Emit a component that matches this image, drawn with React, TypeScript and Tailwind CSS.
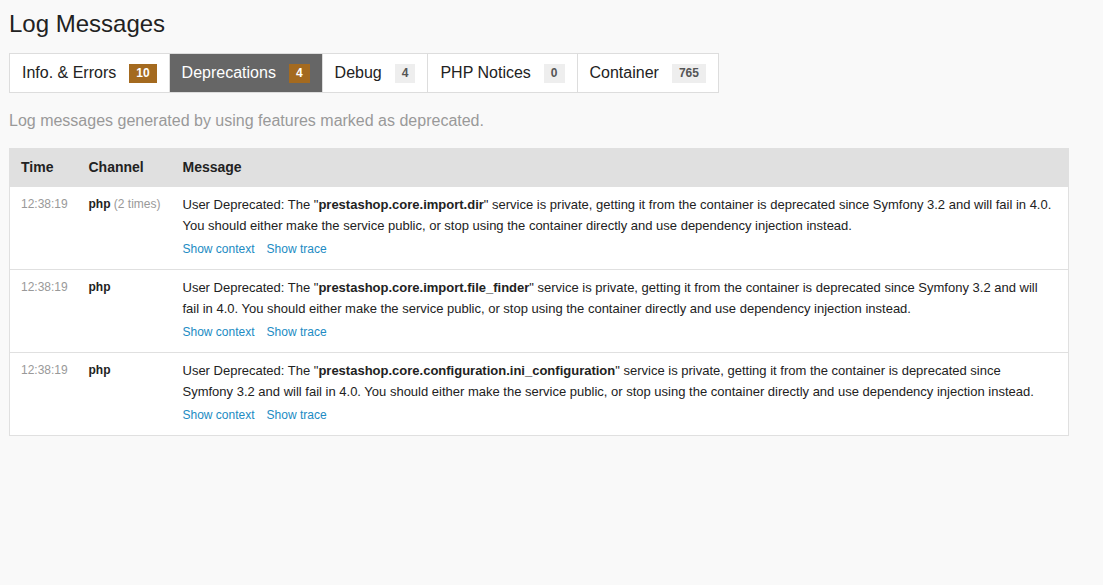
import type { ReactElement } from 'react'

interface Tab {
  label: string
  count: number
  active?: boolean
  warn?: boolean
}

const tabs: Tab[] = [
  { label: 'Info. & Errors', count: 10, warn: true },
  { label: 'Deprecations', count: 4, active: true, warn: true },
  { label: 'Debug', count: 4 },
  { label: 'PHP Notices', count: 0 },
  { label: 'Container', count: 765 },
]

interface LogRow {
  service: string
  before: string
  after: string
  times?: number
}

const rows: LogRow[] = [
  {
    service: 'prestashop.core.import.dir',
    before: 'User Deprecated: The "',
    after:
      '" service is private, getting it from the container is deprecated since Symfony 3.2 and will fail in 4.0. You should either make the service public, or stop using the container directly and use dependency injection instead.',
    times: 2,
  },
  {
    service: 'prestashop.core.import.file_finder',
    before: 'User Deprecated: The "',
    after:
      '" service is private, getting it from the container is deprecated since Symfony 3.2 and will fail in 4.0. You should either make the service public, or stop using the container directly and use dependency injection instead.',
  },
  {
    service: 'prestashop.core.configuration.ini_configuration',
    before: 'User Deprecated: The "',
    after:
      '" service is private, getting it from the container is deprecated since Symfony 3.2 and will fail in 4.0. You should either make the service public, or stop using the container directly and use dependency injection instead.',
  },
]

function TabItem({ tab, first }: { tab: Tab; first: boolean }): ReactElement {
  return (
    <div
      className={`flex h-[38px] items-center px-[12px] text-[16px] ${first ? '' : 'border-l border-[#ddd]'} ${
        tab.active ? 'bg-[#666] text-white' : 'bg-white text-[#222]'
      }`}
    >
      <span>{tab.label}</span>
      <span
        className={`ml-[13px] flex h-[19px] items-center px-[7px] text-[12px] font-bold ${
          tab.warn ? 'bg-[#a46a1f] text-white' : 'bg-[#eee] text-[#555]'
        }`}
      >
        {tab.count}
      </span>
    </div>
  )
}

export default function App(): ReactElement {
  return (
    <div className="min-h-[585px] bg-[#f9f9f9] px-[9px] pt-[9px] text-[#222]" style={{ fontFamily: '"Liberation Sans", Arial, sans-serif' }}>
      <h2 className="text-[24px] leading-[30px]">Log Messages</h2>

      <div className="mt-[14px] flex w-fit border border-[#ddd]">
        {tabs.map((t, i) => (
          <TabItem key={t.label} tab={t} first={i === 0} />
        ))}
      </div>

      <p className="mt-[18px] text-[16px] leading-[20px] text-[#999]">
        Log messages generated by using features marked as deprecated.
      </p>

      <table className="mt-[17px] w-[1060px] border-collapse border border-[#e0e0e0] bg-white">
        <thead>
          <tr className="bg-[#e0e0e0] text-left text-[14px] font-bold">
            <th className="h-[38px] w-[67px] pl-[11px] align-middle">Time</th>
            <th className="w-[94px] pl-[12px] align-middle">Channel</th>
            <th className="pl-[12px] pr-[12px] align-middle">Message</th>
          </tr>
        </thead>
        <tbody>
          {rows.map((r, i) => (
            <tr key={i} className="border-t border-[#e0e0e0] align-top">
              <td className="pl-[11px] pt-[10px] text-[12px] leading-[14px] text-[#999]">12:38:19</td>
              <td className="pl-[12px] pt-[10px] text-[12px] leading-[14px] whitespace-nowrap">
                <span className="font-bold">php</span>
                {r.times && <span className="text-[#999]"> ({r.times} times)</span>}
              </td>
              <td className="pl-[12px] pr-[15px] pt-[7px] pb-[11px] text-[13px] leading-[21px]">
                <div>
                  {r.before}
                  <b>{r.service}</b>
                  {r.after}
                </div>
                <div className="mt-[5px] flex gap-[12px] text-[12px] leading-[17px] text-[#218bc3]">
                  <span>Show context</span>
                  <span>Show trace</span>
                </div>
              </td>
            </tr>
          ))}
        </tbody>
      </table>
    </div>
  )
}
